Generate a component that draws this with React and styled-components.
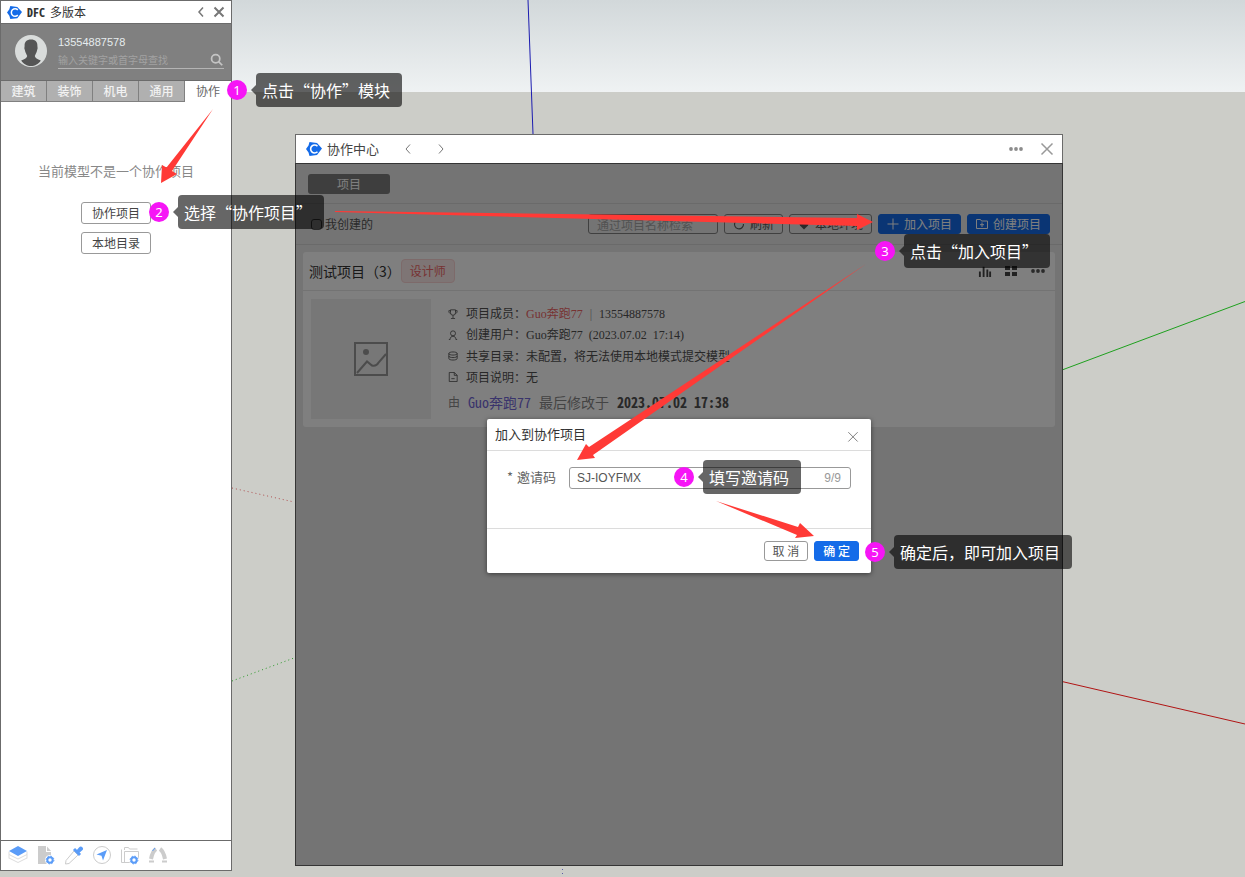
import React, { useState } from "react";
import styled, { createGlobalStyle, css } from "styled-components";

const GlobalStyle = createGlobalStyle`
  * {
    box-sizing: border-box;
  }
  body {
    margin: 0;
    font-family: "Noto Sans CJK SC", "Liberation Sans", sans-serif;
    font-size: 12px;
    line-height: 20px;
  }
  button, input {
    font-family: inherit;
    font-size: 12px;
  }
  svg {
    display: block;
    flex: none;
  }
`;

const Desktop = styled.div`
  position: relative;
  display: flex;
  min-height: 100vh;
  overflow: hidden;
  background: linear-gradient(#d2d8da 0, #eff2f3 92px, #cccdc8 92px);
`;

const Axes = styled.svg`
  position: absolute;
  inset: 0;
  width: 100%;
  height: 100%;
`;

const Arrows = styled(Axes)`
  z-index: 4;
  pointer-events: none;
`;

const IconButton = styled.button`
  display: flex;
  align-items: center;
  justify-content: center;
  padding: 0;
  border: 0;
  background: none;
  color: ${(props) => props.$color || "#777"};
  cursor: pointer;
`;

/* ---------- side panel ---------- */

const Side = styled.aside`
  position: relative;
  display: flex;
  flex-direction: column;
  width: 232px;
  margin-bottom: 6px;
  border: 1px solid #6b6b6b;
  background: #fff;
`;

const SideTitle = styled.header`
  display: flex;
  align-items: center;
  gap: 5px;
  height: 23px;
  padding: 0 4px 0 6px;
  border-bottom: 1px solid #6b6b6b;
  color: #333;
  b {
    font-feature-settings: "hwid";
  }
  span {
    flex: 1;
  }
`;

const TitleIcons = styled.div`
  display: flex;
  gap: 2px;
`;

const Profile = styled.div`
  display: flex;
  align-items: center;
  gap: 11px;
  height: 57px;
  padding: 0 7px 2px 14px;
  background: #808080;
  border-bottom: 1px solid #6b6b6b;
`;

const ProfileText = styled.div`
  flex: 1;
  color: #e6ecee;
  font-family: "Liberation Sans", sans-serif;
  font-size: 11px;
  line-height: 16px;
`;

const SearchLine = styled.label`
  display: flex;
  align-items: center;
  margin-top: 2px;
  border-bottom: 1px solid #b4b4b4;
  input {
    flex: 1;
    min-width: 0;
    height: 16px;
    padding: 0;
    border: 0;
    outline: 0;
    background: none;
    color: #fff;
    font-family: "Noto Sans CJK SC", sans-serif;
    font-size: 10px;
  }
  input::placeholder {
    color: #a2a2a2;
  }
`;

const Tabs = styled.nav`
  display: grid;
  grid-template-columns: repeat(5, 1fr);
`;

const Tab = styled.button`
  height: 21px;
  padding: 0;
  border: 0;
  border-right: 1px solid #808080;
  border-bottom: 1px solid #808080;
  background: #b0b0b0;
  color: #f2f2f2;
  font-weight: 500;
  line-height: 18px;
  ${(props) =>
    props.$active &&
    css`
      border-right: 0;
      border-color: transparent;
      background: #fff;
      color: #666;
      font-weight: 400;
    `}
`;

const SideBody = styled.div`
  flex: 1;
  display: flex;
  flex-direction: column;
  align-items: center;
  gap: 8px;
  padding-top: 59px;
  color: #888;
  p {
    margin: 0 0 13px;
    font-size: 13px;
  }
`;

const SideButton = styled.button`
  width: 70px;
  height: 22px;
  padding: 0;
  border: 1px solid #999;
  border-radius: 3px;
  background: #fff;
  color: #444;
  line-height: 18px;
`;

const SideFooter = styled.footer`
  display: flex;
  align-items: center;
  gap: 8px;
  height: 30px;
  padding: 0 0 2px 7px;
  border-top: 1px solid #6b6b6b;
`;

/* ---------- collaboration window ---------- */

const Workspace = styled.main`
  position: relative;
  flex: 1;
  display: flex;
  padding: 134px 182px 11px 63px;
`;

const Window = styled.section`
  flex: 1;
  display: flex;
  flex-direction: column;
  border: 1px solid #6b6b6b;
  background: #e8e8e8;
`;

const WindowTitle = styled.header`
  display: flex;
  align-items: center;
  height: 28px;
  padding: 0 7px 0 10px;
  background: #fff;
  color: #444;
  font-size: 13px;
  h1 {
    margin: 0 21px 0 5px;
    font-size: 13px;
    font-weight: 400;
  }
`;

const NavButtons = styled.div`
  display: flex;
  gap: 17px;
  margin-right: auto;
`;

const TitleActions = styled.div`
  display: flex;
  gap: 15px;
`;

const WindowBody = styled.div`
  position: relative;
  flex: 1;
  border-top: 1px solid #6b6b6b;
`;

const Mask = styled.div`
  position: absolute;
  inset: -1px;
  display: flex;
  align-items: flex-start;
  justify-content: center;
  padding-top: 256px;
  background: rgba(0, 0, 0, 0.5);
`;

const Bar = styled.div`
  display: flex;
  align-items: center;
  gap: 6px;
  height: ${(props) => props.$height};
  padding: 0 12px;
  border-bottom: 1px solid #d4d4d4;
`;

const ProjectTab = styled.button`
  width: 82px;
  height: 20px;
  padding: 0;
  border: 0;
  border-radius: 3px;
  background: #7c7c7c;
  color: #fff;
  line-height: 18px;
`;

const CheckLabel = styled.label`
  display: flex;
  align-items: center;
  gap: 3px;
  margin-right: auto;
  padding-left: 3px;
  color: #555;
  input {
    appearance: none;
    width: 11px;
    height: 11px;
    margin: 0;
    border: 1px solid #555;
    border-radius: 3px;
  }
`;

const FilterInput = styled.input`
  width: 130px;
  height: 20px;
  padding: 0 8px;
  border: 1px solid #808080;
  border-radius: 3px;
  background: none;
  &::placeholder {
    color: #a4a4a4;
  }
`;

const ToolButton = styled.button`
  display: flex;
  align-items: center;
  justify-content: center;
  gap: 5px;
  height: 20px;
  padding: 0 8px;
  border: 1px solid #808080;
  border-radius: 3px;
  background: none;
  color: #555;
  line-height: 18px;
  ${(props) =>
    props.$primary &&
    css`
      border-color: #146be8;
      background: #146be8;
      color: #fff;
    `}
`;

const Card = styled.article`
  margin: 7px;
  border-radius: 3px;
  background: #fff;
`;

const CardHead = styled.div`
  display: flex;
  align-items: center;
  gap: 12px;
  height: 39px;
  padding: 0 9px 0 6px;
  border-bottom: 1px solid #e6e6e6;
  color: #555;
  h2 {
    margin: 0;
    color: #333;
    font-size: 14px;
    font-weight: 400;
  }
`;

const Tag = styled.span`
  margin: 0 auto 0 -12px;
  padding: 1px 8px;
  border: 1px solid #fad4d4;
  border-radius: 4px;
  background: #fdeaea;
  color: #e66;
`;

const CardBody = styled.div`
  display: flex;
  gap: 17px;
  padding: 8px;
`;

const Cover = styled.div`
  display: flex;
  align-items: center;
  justify-content: center;
  width: 120px;
  height: 120px;
  background: #eee;
`;

const Info = styled.div`
  flex: 1;
  padding-top: 4px;
`;

const InfoRow = styled.div`
  display: flex;
  align-items: center;
  gap: 8px;
  height: 21px;
  color: #505050;
  font-family: "Liberation Serif", "Noto Sans CJK SC", serif;
  white-space: pre;
  em {
    color: #e66;
    font-style: normal;
  }
  i {
    margin: 0 1px;
    color: #999;
    font-style: normal;
  }
`;

const Cjk = styled.span`
  font-family: "Noto Sans CJK SC", sans-serif;
`;

const Modified = styled.div`
  display: flex;
  gap: 8px;
  margin-top: 5px;
  color: #888;
  font-size: 14px;
  small {
    font-size: 12px;
  }
  a {
    color: #7468d8;
    text-decoration: none;
    font-feature-settings: "hwid";
  }
  b {
    color: #505050;
    font-feature-settings: "hwid";
  }
`;

/* ---------- join dialog ---------- */

const Dialog = styled.form`
  width: 384px;
  border-radius: 2px;
  background: #fff;
  box-shadow: 0 1px 5px rgba(0, 0, 0, 0.5);
`;

const DialogHead = styled.div`
  display: flex;
  align-items: center;
  justify-content: space-between;
  height: 32px;
  padding: 0 11px 0 8px;
  border-bottom: 1px solid #dcdcdc;
  color: #333;
  h3 {
    margin: 0;
    padding-bottom: 2px;
    font-size: 13px;
    font-weight: 400;
  }
`;

const DialogBody = styled.div`
  display: flex;
  align-items: flex-start;
  gap: 13px;
  height: 77px;
  padding: 16px 20px;
  color: #666;
  label {
    font-size: 13px;
  }
  i {
    padding-right: 1px;
    font-style: normal;
  }
`;

const CodeField = styled.div`
  flex: 1;
  display: flex;
  align-items: center;
  height: 22px;
  padding: 0 9px 0 7px;
  border: 1px solid #999;
  border-radius: 3px;
  color: #999;
  font-family: "Liberation Sans", sans-serif;
  input {
    flex: 1;
    min-width: 0;
    padding: 0;
    border: 0;
    outline: 0;
    color: #555;
  }
`;

const DialogFoot = styled.div`
  display: flex;
  justify-content: flex-end;
  gap: 6px;
  height: 45px;
  padding: 12px;
  border-top: 1px solid #dcdcdc;
`;

const DialogButton = styled.button`
  height: 20px;
  padding: 0 8px;
  border: 1px solid ${(props) => (props.$primary ? "#146be8" : "#999")};
  border-radius: 3px;
  background: ${(props) => (props.$primary ? "#146be8" : "#fff")};
  color: ${(props) => (props.$primary ? "#fff" : "#555")};
  font-weight: ${(props) => (props.$primary ? 500 : 400)};
  line-height: 18px;
`;

/* ---------- numbered notes ---------- */

const NoteBox = styled.div`
  position: absolute;
  z-index: 5;
  left: ${(props) => props.$x}px;
  top: ${(props) => props.$y}px;
  display: flex;
  align-items: center;
  gap: 4px;
  color: #fff;
  white-space: nowrap;
`;

const NoteNumber = styled.span`
  width: 20px;
  height: 20px;
  border-radius: 50%;
  background: #f615f6;
  font-family: "Noto Sans", sans-serif;
  font-size: 13px;
  text-align: center;
`;

const NoteText = styled.span`
  display: flex;
  align-items: center;
  &::before {
    content: "";
    border: 5px solid transparent;
    border-left: 0;
    border-right-color: rgba(0, 0, 0, 0.6);
  }
  span {
    padding: 5px 12px 5px 6px;
    border-radius: 4px;
    background: rgba(0, 0, 0, 0.6);
    font-size: 16px;
    line-height: 24px;
  }
`;

const notes = [
  { x: 227, y: 73, text: "点击“协作”模块" },
  { x: 149, y: 195, text: "选择“协作项目”" },
  { x: 875, y: 234, text: "点击“加入项目”" },
  { x: 674, y: 460, text: "填写邀请码" },
  { x: 865, y: 535, text: "确定后，即可加入项目" },
];

const Logo = ({ width = 14 }) => (
  <svg width={width} height={width} viewBox="0 0 16 16">
    <path d="M3.500 1 11 2 16 7.500 11 14 3.500 15 2.500 11.500 0 8 2.500 4.500Z" fill="#146be8" />
    <path
      d="M11.500 5.200A4 4 0 1 0 11.500 10.800"
      fill="none"
      stroke="#fff"
      strokeWidth="1.600"
    />
  </svg>
);

const Stroke = ({ d, w = 16, size = 16, sw = 1, children }) => (
  <svg
    width={size}
    height={size}
    viewBox={`0 0 ${w} ${w}`}
    fill="none"
    stroke="currentColor"
    strokeWidth={sw}
  >
    <path d={d} />
    {children}
  </svg>
);

const Dots = () => (
  <svg width="16" height="16" viewBox="0 0 16 16" fill="currentColor">
    <circle cx="3" cy="8" r="1.900" />
    <circle cx="8" cy="8" r="1.900" />
    <circle cx="13" cy="8" r="1.900" />
  </svg>
);

const Gear = ({ x, y }) => (
  <g>
    <circle cx={x} cy={y} r="5" fill="#fff" />
    <circle cx={x} cy={y} r="2.700" fill="none" stroke="#5a9cf8" strokeWidth="2" />
    <circle
      cx={x}
      cy={y}
      r="3.900"
      fill="none"
      stroke="#5a9cf8"
      strokeWidth="1"
      strokeDasharray="1.500 1.560"
    />
  </g>
);

const SidePanel = () => (
  <Side>
    <SideTitle>
      <Logo width={15} />
      <b>DFC</b>
      <span>多版本</span>
      <TitleIcons>
        <IconButton aria-label="收起">
          <Stroke d="M10 3.500 6 8 10 12.500" sw={1.5} />
        </IconButton>
        <IconButton aria-label="关闭">
          <Stroke d="M3.500 3.500 12.500 12.500M12.500 3.500 3.500 12.500" sw={2} />
        </IconButton>
      </TitleIcons>
    </SideTitle>
    <Profile>
      <svg width="32" height="32" viewBox="0 0 32 32">
        <circle cx="16" cy="16" r="16" fill="#d9dcdb" />
        <path
          d="M16 4.500c-4.500 0-6.600 2.500-6.400 6.500 0 1.500-.6 2.200.2 3.800.6 3.200 2 5 2.400 6.200-.2 2-2.500 3-6 4.500 2 3.500 6 5.500 9.800 5.500s7.800-2 9.800-5.500c-3.500-1.500-5.800-2.500-6-4.500.4-1.200 1.800-3 2.400-6.200.8-1.600.2-2.300.2-3.800.2-4-1.900-6.500-6.400-6.500z"
          fill="#555"
        />
      </svg>
      <ProfileText>
        13554887578
        <SearchLine>
          <input aria-label="查找" placeholder="输入关键字或首字母查找" />
          <IconButton aria-label="搜索" $color="#c4c4c4">
            <Stroke d="M9.500 9.500 14 14" size={14} sw={2}>
              <circle cx="6.500" cy="6.500" r="4.700" />
            </Stroke>
          </IconButton>
        </SearchLine>
      </ProfileText>
    </Profile>
    <Tabs>
      {["建筑", "装饰", "机电", "通用", "协作"].map((name) => (
        <Tab key={name} $active={name === "协作"}>
          {name}
        </Tab>
      ))}
    </Tabs>
    <SideBody>
      <p>当前模型不是一个协作项目</p>
      <SideButton>协作项目</SideButton>
      <SideButton>本地目录</SideButton>
    </SideBody>
    <SideFooter>
      <IconButton aria-label="图层">
        <svg width="20" height="20" viewBox="0 0 20 20" fill="none">
          <path d="M1 9.500 10 14 19 9.500M1 13 10 17.500 19 13M1 6.500v7M19 6.500v7" stroke="#ddd" />
          <path d="M10 1 19 6 10 11 1 6Z" fill="#5a9cf8" />
        </svg>
      </IconButton>
      <IconButton aria-label="文件设置">
        <svg width="20" height="20" viewBox="0 0 20 20">
          <path d="M2 1h8v6h5v12H2z" fill="#ccc" />
          <path d="M11 1.500 15 6h-4z" fill="#ccc" />
          <Gear x={14} y={15} />
        </svg>
      </IconButton>
      <IconButton aria-label="吸管">
        <svg width="20" height="20" viewBox="0 0 20 20">
          <path d="M10 6 14 10 5 18.500 1.500 19 2 15.500Z" fill="#fff" stroke="#ccc" />
          <path d="M10 4 16 10" stroke="#5a9cf8" strokeWidth="3" />
          <path d="M12 6 15 2.500C17-.5 21 3.500 18 5.500L14.500 8.500Z" fill="#5a9cf8" />
        </svg>
      </IconButton>
      <IconButton aria-label="定位">
        <svg width="20" height="20" viewBox="0 0 20 20">
          <circle cx="10" cy="10" r="8.500" fill="none" stroke="#ccc" />
          <path d="M15 5 11 15.500 9.500 10.800 4.500 9.500Z" fill="#5a9cf8" />
        </svg>
      </IconButton>
      <IconButton aria-label="文件夹设置">
        <svg width="20" height="20" viewBox="0 0 20 20" fill="none">
          <path d="M4.500 5V2.500h4l1 1.500H17.500M1.500 4.500V17.500H12M4.500 6.500h14V14M4.500 6.500V17.500" stroke="#ccc" />
          <Gear x={14} y={15} />
        </svg>
      </IconButton>
      <IconButton aria-label="同步">
        <svg width="20" height="20" viewBox="0 0 20 20" fill="none">
          <path d="M8 4C5 6 4 9 3 14M12 4C15 6 16 9 17 14" stroke="#ccc" strokeWidth="4" />
          <path d="M1 16.500h5M14 16.500h5" stroke="#ccc" strokeWidth="2" />
          <path d="M4.500 6 7 3" stroke="#5a9cf8" />
        </svg>
      </IconButton>
    </SideFooter>
  </Side>
);

const ProjectCard = () => (
  <Card>
    <CardHead>
      <h2>测试项目（3）</h2>
      <Tag>设计师</Tag>
      <IconButton aria-label="统计" $color="#444">
        <Stroke d="M2 14V8M6 14V3M10 14V6M13 14V8" w={15} size={14} sw={2} />
      </IconButton>
      <IconButton aria-label="宫格" $color="#444">
        <svg width="14" height="14" viewBox="0 0 14 14" fill="currentColor">
          <path d="M1 2h5v4H1zM8 2h5v4H8zM1 8h5v4H1zM8 8h5v4H8z" />
        </svg>
      </IconButton>
      <IconButton aria-label="更多" $color="#555">
        <Dots />
      </IconButton>
    </CardHead>
    <CardBody>
      <Cover>
        <svg width="34" height="34" viewBox="0 0 34 34" fill="none" stroke="#999" strokeWidth="2">
          <path d="M1 1h32v32H1zM3 31 13 19.500 18 23.500Q22 25 25 20L32 12" />
          <circle cx="12" cy="10" r="3" fill="#999" stroke="none" />
        </svg>
      </Cover>
      <Info>
        <InfoRow>
          <Stroke size={10} w={12} d="M3 1h6v3.500a3 3 0 0 1-6 0zM3 2H1c0 2 .5 3 2 3.500M9 2h2c0 2-.5 3-2 3.500M6 7.500V11M3.500 11.500h5" />
          <span>
            <Cjk>项目成员：</Cjk>
            <em>Guo奔跑77</em>
            <i>{"  |  "}</i>
            13554887578
          </span>
        </InfoRow>
        <InfoRow>
          <Stroke size={10} w={12} d="M1 11.500h1.500C2.500 9 4 7.500 6 7.500S9.500 9 9.500 11.500H11">
            <circle cx="6" cy="4" r="3" />
          </Stroke>
          <span>
            <Cjk>创建用户：</Cjk>
            {"Guo奔跑77  (2023.07.02  17:14)"}
          </span>
        </InfoRow>
        <InfoRow>
          <Stroke size={10} w={12} d="M1 3c0-2.500 10-2.500 10 0s-10 2.500-10 0v6c0 2.500 10 2.500 10 0V3M1 6c0 2.500 10 2.500 10 0" />
          <Cjk>共享目录：未配置，将无法使用本地模式提交模型</Cjk>
        </InfoRow>
        <InfoRow>
          <Stroke size={10} w={12} d="M1.500.5h6l3.500 3.500v7.500H1.500zM7.500.5V4H11M4 8h4" />
          <Cjk>项目说明：无</Cjk>
        </InfoRow>
        <Modified>
          <small>由</small>
          <a href="#user">Guo奔跑77</a>
          <span>最后修改于</span>
          <b>2023.07.02 17:38</b>
        </Modified>
      </Info>
    </CardBody>
  </Card>
);

const JoinDialog = () => {
  const [code, setCode] = useState("SJ-IOYFMX");

  return (
    <Dialog onSubmit={(e) => e.preventDefault()}>
      <DialogHead>
        <h3>加入到协作项目</h3>
        <IconButton type="button" aria-label="关闭">
          <Stroke d="M2.500 4.500 12.500 14.500M12.500 4.500 2.500 14.500" size={14} w={15} />
        </IconButton>
      </DialogHead>
      <DialogBody>
        <label htmlFor="code">
          <i>*</i> 邀请码
        </label>
        <CodeField>
          <input
            id="code"
            maxLength={9}
            value={code}
            onChange={(e) => setCode(e.target.value)}
          />
          <span>{code.length}/9</span>
        </CodeField>
      </DialogBody>
      <DialogFoot>
        <DialogButton type="button">取 消</DialogButton>
        <DialogButton $primary>确 定</DialogButton>
      </DialogFoot>
    </Dialog>
  );
};

const CollabWindow = () => (
  <Window>
    <WindowTitle>
      <Logo width={16} />
      <h1>协作中心</h1>
      <NavButtons>
        <IconButton aria-label="后退">
          <Stroke d="M10 3.500 6 8 10 12.500" />
        </IconButton>
        <IconButton aria-label="前进">
          <Stroke d="M6 3.500 10 8 6 12.500" />
        </IconButton>
      </NavButtons>
      <TitleActions>
        <IconButton aria-label="更多" $color="#8c8c8c">
          <Dots />
        </IconButton>
        <IconButton aria-label="关闭" $color="#999">
          <Stroke d="M2.500 2.500 13.500 13.500M13.500 2.500 2.500 13.500" sw={1.5} />
        </IconButton>
      </TitleActions>
    </WindowTitle>
    <WindowBody>
      <Bar $height="40px">
        <ProjectTab>项目</ProjectTab>
      </Bar>
      <Bar $height="41px">
        <CheckLabel>
          <input type="checkbox" />
          我创建的
        </CheckLabel>
        <FilterInput aria-label="项目名称" placeholder="通过项目名称检索" />
        <ToolButton>
          <Stroke d="M12.500 4.500A6 6 0 1 0 14 8M13 1v4H9" size={12} sw={1.5} />
          刷新
        </ToolButton>
        <ToolButton>
          <svg width="12" height="12" viewBox="0 0 12 12" fill="currentColor">
            <path d="M6 11.500 2 7.500A4.500 4.500 0 0 1 6 1a4.500 4.500 0 0 1 4 6.500z" />
          </svg>
          本地环境
        </ToolButton>
        <ToolButton $primary>
          <Stroke d="M6 .5v11M.5 6h11" size={12} w={12} />
          加入项目
        </ToolButton>
        <ToolButton $primary>
          <Stroke d="M.5 1.500h4l1 1.500h6v7.500H.5zM6 4.500v4.500M4 6.700h4" size={12} w={12} />
          创建项目
        </ToolButton>
      </Bar>
      <ProjectCard />
      <Mask>
        <JoinDialog />
      </Mask>
    </WindowBody>
  </Window>
);

const App = () => {
  return (
    <>
      <GlobalStyle />
      <Desktop>
        <Axes fill="none">
          <path d="M528 0 533 134" stroke="#1c1cb0" />
          <path d="M562.500 869v8" stroke="#5a5aa8" strokeDasharray="1 3" />
          <path d="M1062 370 1245 301.500" stroke="#1ea01e" />
          <path d="M1062 681.500 1245 724" stroke="#b01414" />
          <path d="M232 488 294 502" stroke="#b05050" strokeDasharray="1 3" />
          <path d="M232 681 294 658" stroke="#2a9a2a" strokeDasharray="1 3" />
        </Axes>
        <SidePanel />
        <Workspace>
          <CollabWindow />
        </Workspace>
        <Arrows fill="#ff3a36">
          <path d="M213 109 166.500 167.500 162 165 161 183 177 174 172 171Z" />
          <path d="M335 211 857 218V214L873 222 857 230V226L335 212Z" />
          <path d="M866 264 589 447 586 444 577 460 595 458 593 455Z" />
          <path d="M716 501 798 527 800 523 814 536 795 538 797 535Z" />
        </Arrows>
        {notes.map((note, i) => (
          <NoteBox key={note.text} $x={note.x} $y={note.y}>
            <NoteNumber>{i + 1}</NoteNumber>
            <NoteText>
              <span>{note.text}</span>
            </NoteText>
          </NoteBox>
        ))}
      </Desktop>
    </>
  );
};

export default App;
